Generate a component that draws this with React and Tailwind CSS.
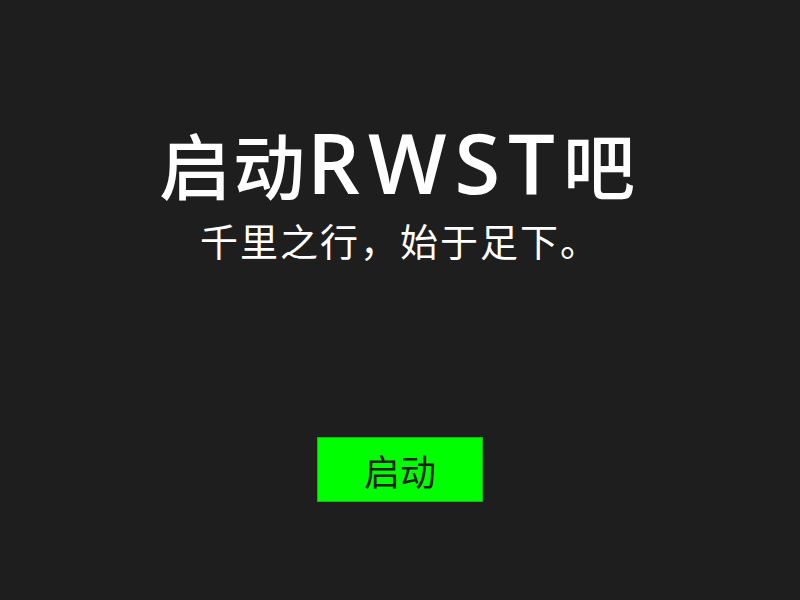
export default function App() {
  return (
    <div className="w-[800px] h-[600px] bg-[#1e1e1e] flex flex-col items-center" style={{ fontFamily: '"Noto Sans CJK SC", sans-serif' }}>
      <div className="mt-[114px] h-[96px] text-white text-[72px] font-medium leading-[96px] whitespace-nowrap tracking-[2px] pr-[4px]">
        <span>启动</span>
        <span className="text-[83px] tracking-[8px] font-['Open_Sans',sans-serif] font-semibold">RWST</span>
        <span>吧</span>
      </div>
      <div className="mt-[8px] text-white text-[38px] leading-[44px] tracking-[2px]">千里之行，始于足下。</div>
      <button className="mt-[175px] w-[166px] h-[65px] bg-[#00ff00] border border-[#18b818] text-[#1e1e1e] text-[36px] leading-none flex items-center justify-center">启动</button>
    </div>
  );
}
